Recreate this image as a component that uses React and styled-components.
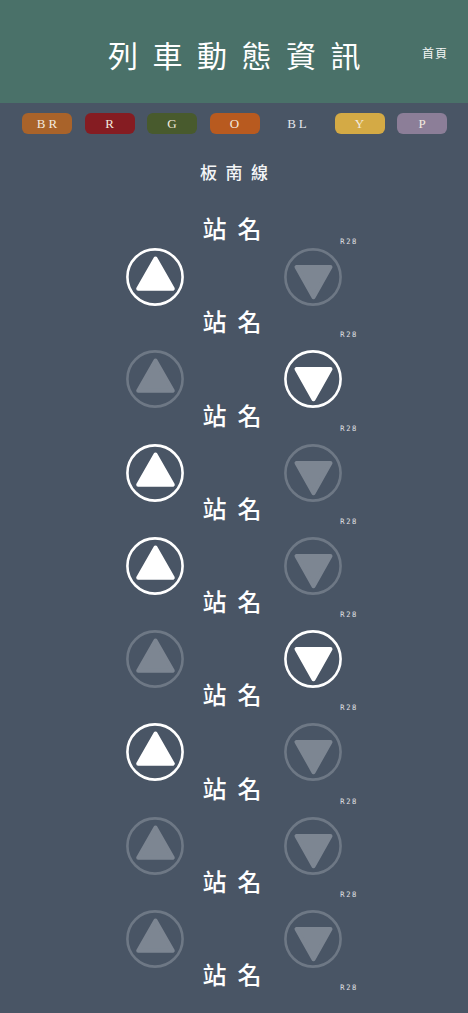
import React from "react";
import styled, { createGlobalStyle } from "styled-components";

const Global = createGlobalStyle`
  html, body {
    margin: 0;
    padding: 0;
    background: #495565;
  }
  body {
    font-family: "Noto Sans CJK TC", "Noto Sans", sans-serif;
    color: #ffffff;
  }
`;

const Page = styled.div`
  min-height: 1013px;
  background: #495565;
  display: flex;
  flex-direction: column;
`;

const Header = styled.header`
  height: 103px;
  background: #4a7169;
  display: grid;
  grid-template-columns: 1fr auto 1fr;
  align-items: center;
`;

const Title = styled.h1`
  grid-column: 2;
  margin: 4px 0 0;
  padding-left: 15px;
  font-size: 30px;
  font-weight: 400;
  letter-spacing: 14.5px;
  line-height: 40px;
  color: #ffffff;
`;

const HomeLink = styled.a`
  grid-column: 3;
  justify-self: end;
  padding-right: 20px;
  font-size: 12px;
  font-weight: 400;
  letter-spacing: 1px;
  color: #f4f6f5;
  text-decoration: none;
  margin-top: 2px;
`;

const LineBar = styled.nav`
  display: flex;
  justify-content: space-between;
  padding: 10px 21px 0 22px;
`;

const LineButton = styled.button`
  width: 50px;
  height: 21px;
  border: none;
  border-radius: 6px;
  padding: 0 0 0 3px;
  background: ${(p) => p.$bg || "transparent"};
  color: ${(p) => (p.$bg ? "#f3eadf" : "#e4e7ec")};
  font-family: "Liberation Serif", serif;
  font-size: 13px;
  letter-spacing: 3px;
  line-height: 21px;
  text-align: center;
`;

const LineTitle = styled.h2`
  margin: 26px 0 0;
  padding-left: 8.5px;
  text-align: center;
  font-size: 17px;
  font-weight: 500;
  letter-spacing: 8.5px;
  line-height: 24px;
  color: #f4f5f7;
`;

const StationList = styled.div`
  width: 216px;
  margin: 30px auto 0;
  display: flex;
  flex-direction: column;
`;

const StationBlock = styled.div`
  height: 93.25px;
  display: flex;
  flex-direction: column;
`;

const NameRow = styled.div`
  height: 28px;
  display: grid;
  grid-template-columns: 58px 1fr 58px;
  align-items: center;
`;

const StationName = styled.div`
  grid-column: 2;
  text-align: center;
  padding-left: 7px;
  font-size: 24px;
  font-weight: 500;
  letter-spacing: 11px;
  line-height: 28px;
  color: #ffffff;
`;

const StationCode = styled.div`
  grid-column: 3;
  align-self: end;
  justify-self: end;
  margin-right: -16px;
  margin-bottom: -5px;
  font-family: "DejaVu Sans Condensed", "DejaVu Sans", sans-serif;
  font-size: 7.5px;
  letter-spacing: 1.6px;
  line-height: 10px;
  color: #e2e3e5;
`;

const ArrowRow = styled.div`
  margin-top: ${(p) => (p.$first ? 6 : 15)}px;
  height: 58px;
  display: grid;
  grid-template-columns: 58px 1fr 58px;
`;

const ArrowButton = styled.button`
  grid-column: ${(p) => (p.$down ? 3 : 1)};
  width: 58px;
  height: 58px;
  padding: 0;
  border: none;
  background: none;
  display: block;
  svg {
    display: block;
  }
`;

function Arrow({ down, active }) {
  const stroke = active ? "#ffffff" : "#6e7885";
  const fill = active ? "#ffffff" : "#7d8692";
  return (
    <ArrowButton $down={down} aria-label={down ? "down" : "up"}>
      <svg width="58" height="58" viewBox="0 0 58 58">
        <circle cx="29" cy="29" r="27.6" fill="none" stroke={stroke} strokeWidth="2.6" />
        <polygon
          points={down ? "12.5,19 46.5,19 29.5,49.2" : "29.5,10.6 46.8,40.7 12.2,40.7"}
          fill={fill}
          stroke={fill}
          strokeWidth="4"
          strokeLinejoin="round"
        />
      </svg>
    </ArrowButton>
  );
}

const lines = [
  { code: "BR", bg: "#a9632a" },
  { code: "R", bg: "#851c22" },
  { code: "G", bg: "#485a2d" },
  { code: "O", bg: "#b85a1f" },
  { code: "BL", bg: null },
  { code: "Y", bg: "#d4aa45" },
  { code: "P", bg: "#8c7e98" },
];

// [up active, down active] for each gap between stations
const arrows = [
  [true, false],
  [false, true],
  [true, false],
  [true, false],
  [false, true],
  [true, false],
  [false, false],
  [false, false],
];

export default function App() {
  const stations = Array.from({ length: 9 }, (_, i) => i);
  return (
    <Page>
      <Global />
      <Header>
        <Title>列車動態資訊</Title>
        <HomeLink href="#">首頁</HomeLink>
      </Header>
      <LineBar>
        {lines.map((l) => (
          <LineButton key={l.code} $bg={l.bg}>
            {l.code}
          </LineButton>
        ))}
      </LineBar>
      <LineTitle>板南線</LineTitle>
      <StationList>
        {stations.map((i) => (
          <StationBlock key={i}>
            <NameRow>
              <StationName>站名</StationName>
              <StationCode>R28</StationCode>
            </NameRow>
            {i < arrows.length && (
              <ArrowRow $first={i === 0}>
                <Arrow active={arrows[i][0]} />
                <Arrow down active={arrows[i][1]} />
              </ArrowRow>
            )}
          </StationBlock>
        ))}
      </StationList>
    </Page>
  );
}
